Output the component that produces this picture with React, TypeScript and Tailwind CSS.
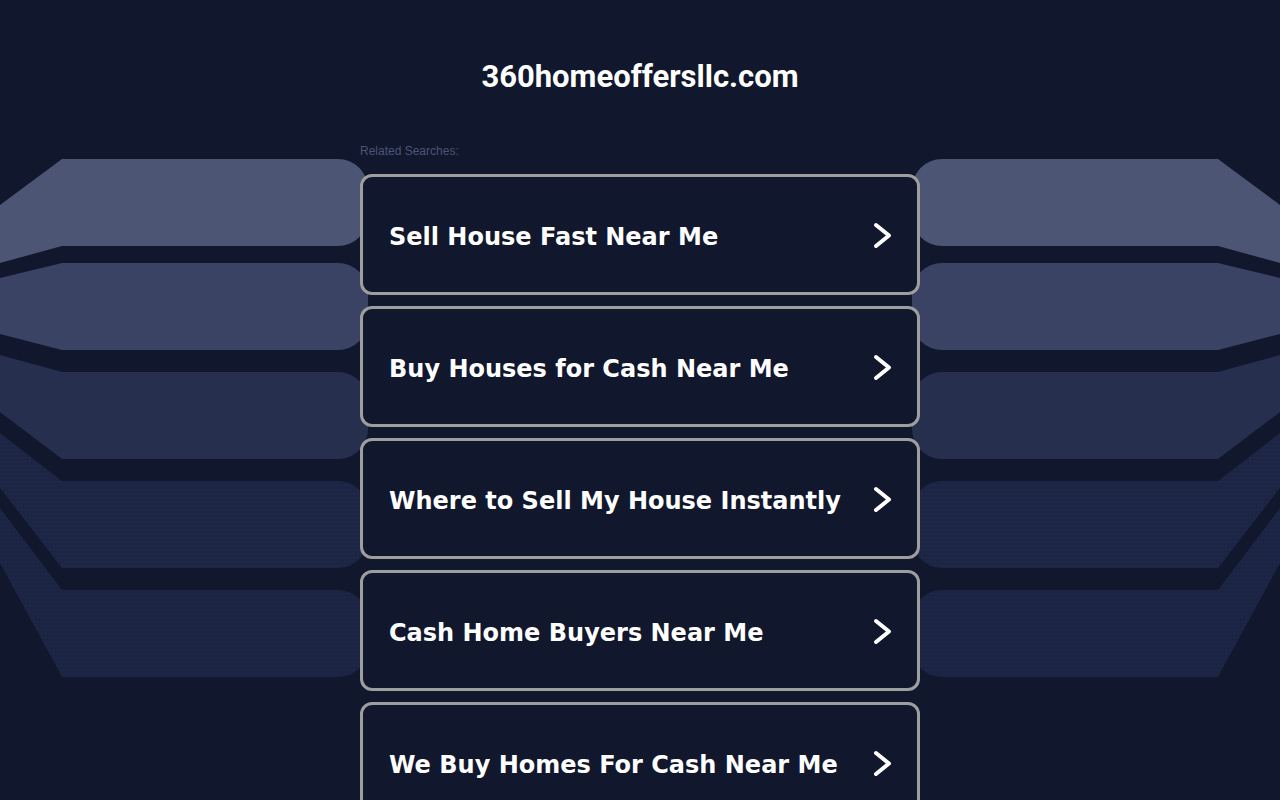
const SEARCHES = [
  'Sell House Fast Near Me',
  'Buy Houses for Cash Near Me',
  'Where to Sell My House Instantly',
  'Cash Home Buyers Near Me',
  'We Buy Homes For Cash Near Me',
];

// left-side bands, mirrored on the right
const BANDS = [
  { top: 159, bottom: 246, lt: 205, lb: 263, fill: '#4c5573' },
  { top: 263, bottom: 350, lt: 278, lb: 334, fill: '#3a4363' },
  { top: 372, bottom: 459, lt: 355, lb: 412, fill: '#262f4d' },
  { top: 481, bottom: 568, lt: 433, lb: 488, fill: '#1c2544' },
  { top: 590, bottom: 677, lt: 508, lb: 563, fill: '#1b2443' },
];

function bandPath(b: (typeof BANDS)[number]) {
  const r = 30;
  return `M62 ${b.top} H${368 - r} A${r} ${r} 0 0 1 368 ${b.top + r} V${b.bottom - r} A${r} ${r} 0 0 1 ${368 - r} ${b.bottom} H62 L0 ${b.lb} V${b.lt} Z`;
}

function Backdrop() {
  return (
    <svg className="absolute inset-0 pointer-events-none" width="1280" height="800" viewBox="0 0 1280 800">
      <defs>
        <pattern id="dots" width="4" height="4" patternUnits="userSpaceOnUse">
          <rect x="1" y="1" width="1" height="1" fill="#2b3559" />
        </pattern>
      </defs>
      {[false, true].map(flip => (
        <g key={String(flip)} transform={flip ? 'translate(1280,0) scale(-1,1)' : undefined}>
          {BANDS.map((b, i) => (
            <g key={i}>
              <path d={bandPath(b)} fill={b.fill} />
              {i > 2 && <path d={bandPath(b)} fill="url(#dots)" opacity="0.6" />}
            </g>
          ))}
        </g>
      ))}
    </svg>
  );
}

function Chevron() {
  return (
    <svg width="21" height="29" viewBox="0 0 21 29" className="shrink-0" aria-hidden>
      <polyline
        points="4,4 17,14.5 4,25"
        fill="none"
        stroke="white"
        strokeWidth="4"
        strokeLinecap="round"
        strokeLinejoin="round"
      />
    </svg>
  );
}

export default function App() {
  return (
    <div className="relative min-h-screen w-full overflow-hidden bg-[#11172d]">
      <Backdrop />
      <div className="relative mx-auto w-[560px] pt-[58px]">
        <h1 className="text-center text-[31px] leading-[38px] font-bold text-white font-['Roboto',sans-serif]">
          360homeoffersllc.com
        </h1>
        <p className="mt-[47px] text-[12px] leading-4 text-[#4b5577] font-['Liberation_Sans',Arial,sans-serif]">
          Related Searches:
        </p>
        <ul className="mt-[15px] flex flex-col gap-[11px]">
          {SEARCHES.map(s => (
            <li key={s}>
              <a
                href="#"
                className="flex h-[121px] items-center justify-between rounded-xl border-[3px] border-[#9e9e9e] bg-[#11172d] pl-[26px] pr-[24px]"
              >
                <span className="pt-[4px] text-[24px] font-bold text-white font-['DejaVu_Sans',Verdana,sans-serif]">
                  {s}
                </span>
                <span className="pt-[1px]">
                  <Chevron />
                </span>
              </a>
            </li>
          ))}
        </ul>
      </div>
    </div>
  );
}
